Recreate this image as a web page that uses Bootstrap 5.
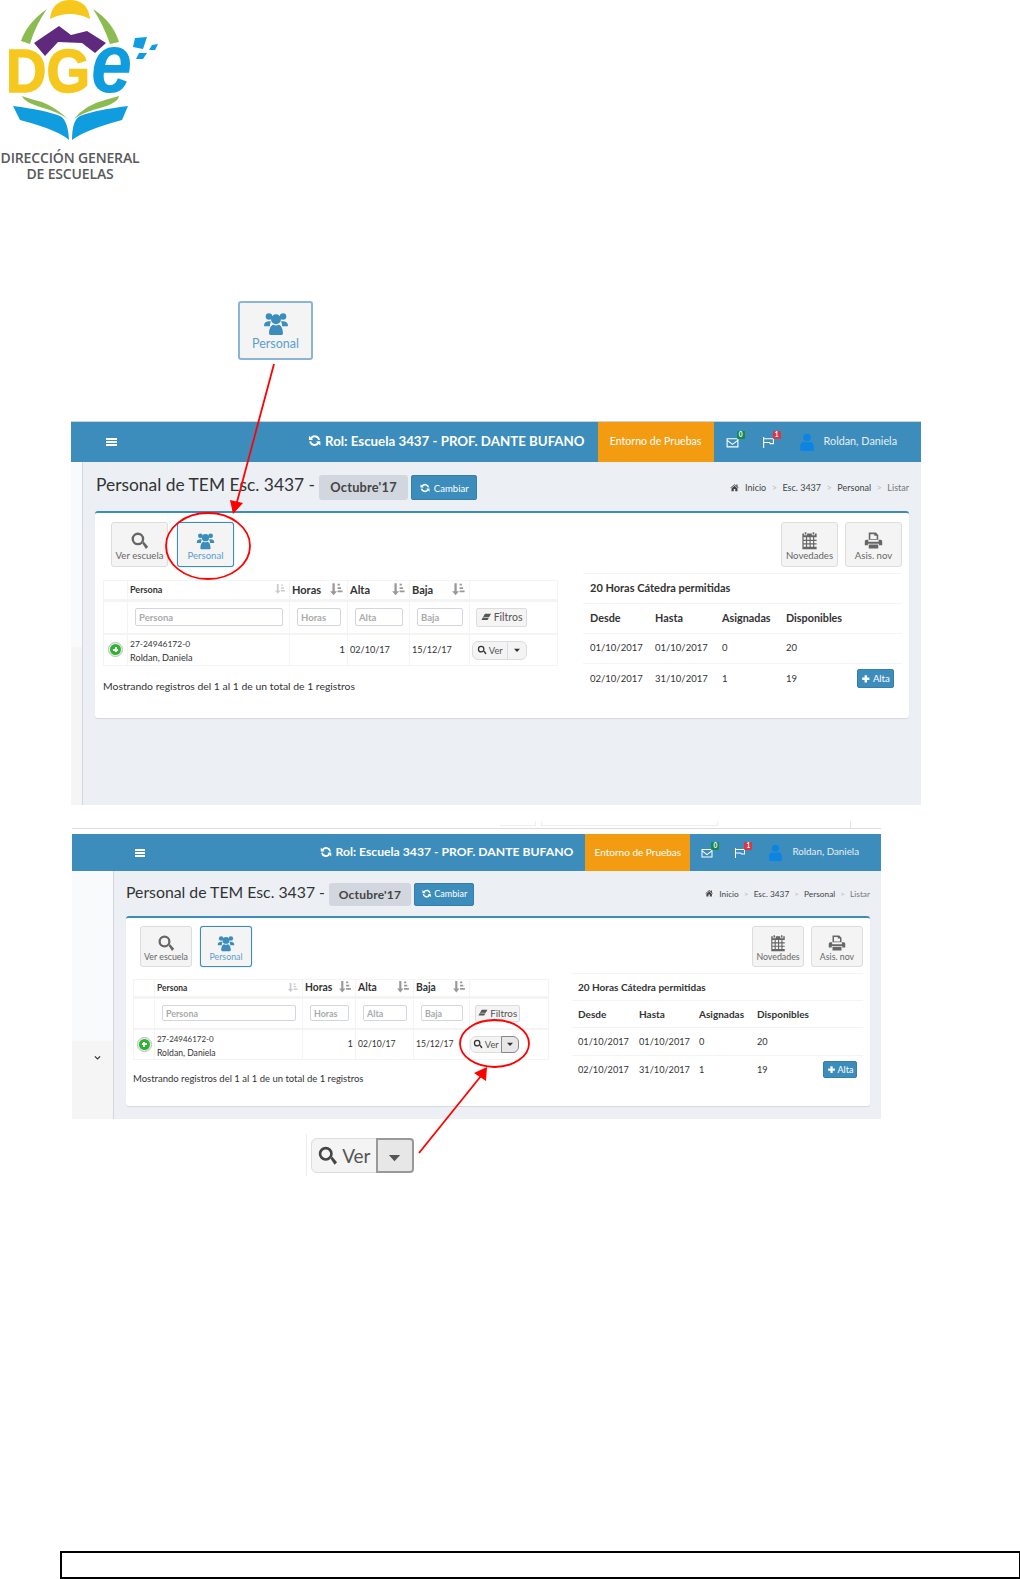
<!DOCTYPE html>
<html lang="es">
<head>
  <meta charset="UTF-8" />
  <meta name="viewport" content="width=device-width, initial-scale=1" />
  <title>Personal - Instructivo</title>
  <link href="https://cdn.jsdelivr.net/npm/bootstrap@5.3.3/dist/css/bootstrap.min.css" rel="stylesheet" />
  <style>
    html, body { margin: 0; background: #fff; }
    body { font-family: "Lato", "Liberation Sans", sans-serif; color: #333; }
    .hoja { position: relative; width: 1020px; height: 1579px; overflow: hidden; }
    .ico { display: inline-block; width: 1em; height: 1em; fill: currentColor; vertical-align: -.12em; }

    /* membrete */
    .membrete { height: 181px; }
    .membrete svg { display: block; width: 160px; height: 142px; }
    .marca { font-family: "Open Sans", sans-serif; font-weight: 600; color: #58595b; line-height: 15.5px; font-size: 14px; width: 140px; margin-top: 8px; text-align: center; letter-spacing: -.15px; white-space: nowrap; }

    /* botones ampliados */
    .ampliado { margin: 120px 0 0 238px; width: 75px; height: 59px; background: #f4f4f4; border: 2px solid #8db4d2; border-radius: 3px; color: #5b9fd0; font-size: 12.5px; line-height: 1; padding-top: 7px; }
    .ampliado .ico { font-size: 26px; display: block; margin: 0 auto 2px; color: #3c8dbc; }
    .ver-grande { margin: 15px 0 0 306px; padding: 4px 0 4px 4px; width: 110px; height: 42px; border-left: 1px solid #eee; }
    .ver-grande .btn-group { height: 35px; width: 103px; }
    .ver-grande .btn { font-size: 19px; line-height: 1; padding: 0; background: #f4f4f4; border: 1px solid #ddd; color: #555; }
    .ver-grande .btn:first-child { width: 65px; }
    .ver-grande .btn:last-child { width: 38px; background: #e7e7e7; border: 2px solid #999; border-radius: 0 4px 4px 0; }
    .ver-grande .ico-caret { font-size: 15px; }
    .ver-grande .btn .ico-lupa { font-size: 21px; color: #444; }

    /* captura */
    .toma { font-size: 10px; background: #ecf0f5; overflow: hidden; }
    .toma-a { width: 850px; height: 384px; margin: 61px 0 0 71px; border-top: 1px solid #d0d0d0; }
    .toma-b { width: 809px; height: 285px; margin: 5px 0 0 72px; }
    .recorte { height: 8px; width: 809px; margin-left: 72px; display: flex; border-bottom: 1px solid #ddd; margin-top: 16px; }
    .recorte i { display: block; height: 5px; border: 1px solid #eee; border-top: 0; }
    .recorte i:nth-child(1) { width: 36px; margin-left: 428px; border-left: 0; }
    .recorte i:nth-child(2) { width: 177px; margin-left: 5px; }
    .recorte i:nth-child(3) { height: 8px; width: 1px; margin-left: 132px; border: 0; background: #e2e2e2; }

    .barra { background: #3c8dbc; color: #fff; padding: 0; justify-content: flex-start; flex-wrap: nowrap; }
    .toma-a .barra { height: 40px; }
    .toma-b .barra { height: 37px; }
    .hamburguesa { display: block; width: 11px; height: 8px; border-top: 2px solid #fff; border-bottom: 2px solid #fff; position: relative; }
    .hamburguesa::after { content: ""; position: absolute; left: 0; right: 0; top: 1px; height: 2px; background: #fff; }
    .toma-a .hamburguesa { margin-left: 35px; }
    .toma-b .hamburguesa { margin-left: 63px; width: 10px; }
    .rol { font-weight: 700; margin-left: auto; white-space: nowrap; }
    .rol .ico { font-size: 1.15em; vertical-align: -.16em; }
    .toma-a .rol { font-size: 13.3px; margin-right: 13px; }
    .toma-b .rol { font-size: 12.2px; margin-right: 12px; }
    .entorno { background: #f39c12; height: 100%; display: flex; align-items: center; justify-content: center; white-space: nowrap; }
    .toma-a .entorno { width: 116px; font-size: 10.6px; }
    .toma-b .entorno { width: 105px; font-size: 10px; }
    .aviso { position: relative; display: block; line-height: 1; }
    .aviso .ico { display: block; }
    .aviso b { position: absolute; top: -5px; right: -6px; min-width: 8px; height: 8px; font-size: 6.5px; line-height: 8px; text-align: center; color: #fff; border-radius: 1px; }
    .toma-a .aviso { margin-left: 12px; font-size: 13px; }
    .toma-a .aviso + .aviso { margin-left: 23px; }
    .toma-b .aviso { margin-left: 11px; font-size: 12px; }
    .toma-b .aviso + .aviso { margin-left: 21px; }
    .usuario { color: #e6eff5; white-space: nowrap; }
    .usuario .ico { color: #0c84e4; }
    .toma-a .usuario { font-size: 10.8px; margin-left: 23px; margin-right: 24px; }
    .toma-a .usuario .ico { font-size: 18px; margin-right: 8px; vertical-align: middle; }
    .toma-b .usuario { font-size: 9.8px; margin-left: 21px; margin-right: 22px; }
    .toma-b .usuario .ico { font-size: 17px; margin-right: 8px; vertical-align: middle; }

    .lateral { flex: none; border-right: 1px solid #d2d6de; display: flex; flex-direction: column; background: #f5f5f5; }
    .lat-sup { background: #f9fafc; }
    .toma-a .cuerpo { height: 343px; }
    .toma-b .cuerpo { height: 248px; }
    .toma-a .lateral { width: 12px; }
    .toma-a .lat-sup { height: 185px; }
    .toma-b .lateral { width: 42px; }
    .toma-b .lat-sup { height: 170px; }
    .toma-b .lat-inf { padding: 13px 0 0 22px; color: #333; font-size: 7px; line-height: 1; }

    .toma-a .contenido { padding: 0 12px; }
    .toma-b .contenido { padding: 0 11px 0 12px; }
    .cabecera { white-space: nowrap; }
    .toma-a .cabecera { height: 49px; padding: 2px 0 0 1px; }
    .toma-b .cabecera { height: 45px; padding: 1px 0 0 0; }
    .cabecera h1 { font-weight: 400; margin: 0 0 4px; color: #333; }
    .toma-a h1 { font-size: 17.4px; }
    .toma-b h1 { font-size: 15.8px; }
    .mes { color: #444; background: #d2d6de; font-weight: 700; border-radius: 3px; display: block; padding: 0; text-align: center; letter-spacing: .2px; }
    .toma-a .mes { width: 89px; height: 25px; line-height: 25px; margin-left: 4px; font-size: 12.8px; }
    .toma-b .mes { width: 82px; height: 23px; line-height: 23px; margin-left: 4px; font-size: 12px; }
    .azul { background: #3c8dbc; border: 1px solid #367fa9; color: #fff; border-radius: 2px; padding: 0; white-space: nowrap; }
    .azul:hover { background: #3c8dbc; color: #fff; }
    .cambiar .ico { font-size: 1.25em; vertical-align: -.2em; }
    .toma-a .cambiar { width: 66px; height: 25px; margin-left: 3px; font-size: 9.6px; line-height: 1; }
    .toma-b .cambiar { width: 60px; height: 23px; margin-left: 3px; font-size: 9px; line-height: 1; }
    .breadcrumb { --bs-breadcrumb-divider: ">"; --bs-breadcrumb-margin-bottom: 0; --bs-breadcrumb-item-padding-x: 5.5px; --bs-breadcrumb-divider-color: #bbb; margin-left: auto; font-size: 9px; color: #444; flex-wrap: nowrap; }
    .breadcrumb .breadcrumb-item.active { color: #777; }
    .breadcrumb .ico { margin-right: 6px; }
    .toma-b .breadcrumb { font-size: 8.3px; --bs-breadcrumb-item-padding-x: 5px; }

    .caja { background: #fff; border-top: 2px solid #3c8dbc; border-radius: 3px; box-shadow: 0 1px 1px rgba(0,0,0,.1); }
    .toma-a .caja { height: 207px; padding: 9px 7px 0 8px; }
    .toma-b .caja { height: 190px; padding: 8px 7px 0 7px; }
    .toma-a .herramientas { padding-left: 8px; gap: 9px; }
    .toma-b .herramientas { padding-left: 7px; gap: 8px; }
    .atajo { display: block; background: #f4f4f4; border: 1px solid #ddd; border-radius: 3px; color: #666; padding: 0; line-height: 1; white-space: nowrap; overflow: hidden; }
    .atajo .ico { display: block; margin: 0 auto 1px; }
    .atajo.activo { color: #5b9fd0; border-color: #3c8dbc; box-shadow: 0 0 1px #3c8dbc; }
    .atajo.activo .ico { color: #3c8dbc; }
    .toma-a .atajo { width: 57px; height: 45px; padding-top: 3px; font-size: 9.6px; }
    .toma-a .atajo .ico { font-size: 19px; }
    .toma-a .atajo:last-child { margin-left: -2px; }
    .toma-b .atajo { width: 52px; height: 41px; padding-top: 3px; font-size: 8.8px; }
    .toma-b .atajo .ico { font-size: 18px; }
    .toma-b .atajo:last-child { margin-left: -1px; }

    .tabla { table-layout: fixed; margin: 0; border-color: #f4f4f4; color: #333; --bs-table-color: #333; }
    .tabla td, .tabla th { padding: 0; vertical-align: middle; border-color: #f4f4f4; white-space: nowrap; }
    .toma-a .lista { width: 455px; margin-top: 13px; font-size: 10px; }
    .toma-b .lista { width: 416px; margin-top: 12px; font-size: 9.4px; }
    .lista th { font-size: 1.1em; padding-left: 2px; }
    .lista th:nth-child(2) { font-size: .9em; padding-left: 2px; }
    .lista thead tr { border-bottom: 3px solid #f4f4f4; }
    .lista .filtro { border-bottom-width: 2px; }
    .lista .orden { float: right; color: #999; margin-right: 4px; font-size: 1.25em; }
    .lista .orden.suave { color: #ccc; }
    .lista td.der { text-align: right; padding-right: 2px; }
    .lista td.ded { padding-left: 2px; font-size: .91em; }
    .lista .fina { font-size: .92em; line-height: 14px; padding: 2px 0 0 2px; }
    .lista .cuil { font-size: .92em; }
    .toma-b .lista .fina { line-height: 13px; }
    .toma-a .lista tr.enc { height: 20px; }
    .toma-a .lista tr.filtro { height: 33px; }
    .toma-a .lista tr.dato { height: 31px; }
    .toma-b .lista tr.enc { height: 18px; }
    .toma-b .lista tr.filtro { height: 31px; }
    .toma-b .lista tr.dato { height: 28px; }
    .toma-a .lista col:nth-child(1) { width: 24px; } .toma-a .lista col:nth-child(2) { width: 162px; } .toma-a .lista col:nth-child(3) { width: 58px; } .toma-a .lista col:nth-child(4) { width: 62px; } .toma-a .lista col:nth-child(5) { width: 60px; }
    .toma-b .lista col:nth-child(1) { width: 21px; } .toma-b .lista col:nth-child(2) { width: 148px; } .toma-b .lista col:nth-child(3) { width: 53px; } .toma-b .lista col:nth-child(4) { width: 58px; } .toma-b .lista col:nth-child(5) { width: 56px; }
    .campo { display: block; width: 100%; height: 18px; padding: 0 3px; font-size: .95em; font-weight: 700; color: #999; border: 1px solid #d2d6de; border-radius: 2px; min-height: 0; line-height: 1; }
    .campo::placeholder { color: #aaa; }
    .celda-campo { padding: 0 6px 0 7px !important; }
    .toma-b .campo { height: 16px; }
    .filtros { display: block; background: #f4f4f4; border: 1px solid #ddd; color: #555; padding: 0; line-height: 1; font-size: 1.05em; border-radius: 2px; white-space: nowrap; }
    .toma-a .filtros { width: 51px; height: 19px; margin-left: 6px; }
    .toma-b .filtros { width: 45px; height: 17px; margin-left: 5px; }
    .ver .btn { background: #f4f4f4; border: 1px solid #ddd; color: #555; font-size: 9.4px; line-height: 1; padding: 0; }
    .ver .ico-lupa { color: #333; font-size: 10px; }
    .ver .ico-caret { font-size: 8px; color: #333; }
    .toma-a .ver { width: 55px; height: 19px; margin: 1px 0 0 2px; }
    .toma-a .ver .btn:first-child { width: 35px; }
    .toma-a .ver .btn:last-child { width: 20px; }
    .toma-b .ver { width: 49px; height: 17px; margin-left: 0; }
    .toma-b .ver .btn:first-child { width: 31px; }
    .toma-b .ver .btn:last-child { width: 18px; background: #e7e7e7; border-color: #888; }
    .alta-si { display: block; width: 15px; height: 15px; border-radius: 50%; border: 1px solid #bbb; background: #eee; padding: 1px; margin: 0 auto; }
    .alta-si i { display: block; width: 11px; height: 11px; border-radius: 50%; background: #2db52d; position: relative; }
    .alta-si i::before { content: ""; position: absolute; left: 3px; right: 3px; top: 4.5px; height: 2px; background: #fff; }
    .alta-si i::after { content: ""; position: absolute; top: 3px; bottom: 3px; left: 4.5px; width: 2px; background: #fff; }
    .toma-a .leyenda { margin: 13px 0 0; font-size: 10.4px; }
    .toma-b .leyenda { margin: 12px 0 0; font-size: 9.5px; }

    .cupos thead th { font-weight: 700; }
    .toma-a .cupos { width: 319px; margin: 6px 0 0 25px; border-top: 1px solid #f4f4f4; font-size: 9.5px; }
    .toma-b .cupos { width: 291px; margin: 6px 0 0 23px; border-top: 1px solid #f4f4f4; font-size: 9.2px; }
    .toma-a .cupos thead th { font-size: 10.8px; }
    .toma-b .cupos thead th { font-size: 10px; }
    .toma-a .cupos thead tr:first-child th { font-size: 11px; }
    .toma-b .cupos thead tr:first-child th { font-size: 10px; }
    .toma-a .cupos th, .toma-a .cupos td { padding-left: 7px; }
    .toma-b .cupos th, .toma-b .cupos td { padding-left: 6px; }
    .toma-a .cupos tr { height: 30px; }
    .toma-b .cupos tr { height: 27px; }
    .toma-b .cupos tbody tr { height: 28px; }
    .toma-a .cupos col:nth-child(1) { width: 65px; } .toma-a .cupos col:nth-child(2) { width: 67px; } .toma-a .cupos col:nth-child(3) { width: 64px; } .toma-a .cupos col:nth-child(4) { width: 71px; }
    .toma-b .cupos col:nth-child(1) { width: 61px; } .toma-b .cupos col:nth-child(2) { width: 60px; } .toma-b .cupos col:nth-child(3) { width: 58px; } .toma-b .cupos col:nth-child(4) { width: 64px; }
    .alta { display: block; margin-left: auto; line-height: 1; }
    .toma-a .alta { width: 37px; height: 19px; margin-right: 8px; font-size: 9.6px; }
    .toma-b .alta { width: 34px; height: 17px; margin-right: 6px; font-size: 9px; }

    .pie { width: 960px; height: 28px; border: 2px solid #000; border-right-width: 1px; margin: 375px 0 0 60px; }
    .anotaciones { position: absolute; left: 0; top: 0; width: 1020px; height: 1579px; pointer-events: none; }
  </style>
</head>
<body>

  <!-- iconos -->
  <svg width="0" height="0" class="position-absolute">
    <symbol id="i-refresh" viewBox="0 0 24 24"><path d="M20.5 10.5A8.5 8.5 0 0 0 5.5 6.8L3 4.5V11h6.5L7.8 9.1A5.4 5.4 0 0 1 17.5 11zM3.5 13.5A8.5 8.5 0 0 0 18.5 17.2L21 19.5V13h-6.5l1.7 1.9A5.4 5.4 0 0 1 6.5 13z"/></symbol>
    <symbol id="i-lupa" viewBox="0 0 24 24"><path fill-rule="evenodd" d="M10 2a8 8 0 1 1-.01 16A8 8 0 0 1 10 2zm0 3a5 5 0 1 0 .01 10A5 5 0 0 0 10 5zM15.2 15.2l2.1-2 5.6 6.6-2.8 2.8z"/></symbol>
    <symbol id="i-users" viewBox="0 0 24 24"><circle cx="5.5" cy="6" r="3"/><circle cx="18.5" cy="6" r="3"/><circle cx="12" cy="8.5" r="4.6"/><path d="M1 14c0-2.5 2-3.6 4.5-3.6 1 0 1.5.2 1.9.5A6 6 0 0 0 6.4 15H1zM23 14c0-2.5-2-3.6-4.5-3.6-1 0-1.5.2-1.9.5a6 6 0 0 1 1 4.1H23zM7 23c-1 0-1.400-.6-1.400-1.600 0-3.600 1.400-7.700 4-7.900 1.500 1 3.300 1 4.800 0 2.600.2 4 4.300 4 7.900 0 1-.4 1.600-1.400 1.600z"/></symbol>
    <symbol id="i-cal" viewBox="0 0 24 24"><path fill-rule="evenodd" d="M6 1.500h2v3H6zM16 1.500h2v3h-2zM3 3h2v2.500h4V3h6v2.500h4V3h2v20H3zM4.500 8v3h3V8zm4.500 0v3h3V8zm4.500 0v3h3V8zm4.500 0v3H21V8zM4.500 12.500v3h3v-3zm4.500 0v3h3v-3zm4.500 0v3h3v-3zm4.500 0v3H21v-3zM4.500 17v3h3v-3zm4.500 0v3h3v-3zm4.500 0v3h3v-3zm4.500 0v3H21v-3z"/></symbol>
    <symbol id="i-print" viewBox="0 0 24 24"><path fill-rule="evenodd" d="M6 2h9l3 3v6H6zm2 2v6h8V6h-3V4zM3 11h2.500v2.500h13V11H21a2 2 0 0 1 2 2v5h-4v-2H5v2H1v-5a2 2 0 0 1 2-2zM6 17h12v5H6z"/></symbol>
    <symbol id="i-home" viewBox="0 0 24 24"><path d="M12 3l5 4.500V4h3v6l3 2.700-1.300 1.400L12 5.500 2.300 14.100 1 12.700zM12 7.500l8 7V22h-6v-6h-4v6H4v-7.500z"/></symbol>
    <symbol id="i-mail" viewBox="0 0 24 24"><path fill-rule="evenodd" d="M1 4h22v17H1zm2 2v1.200l9 7 9-7V6zm18 3.700l-9 7-9-7V19h18z"/></symbol>
    <symbol id="i-flag" viewBox="0 0 24 24"><path fill-rule="evenodd" d="M2 2h2v2h18v11h-7l-2-2H4v9H2zm2 4v5h10l2 2h4V6z"/></symbol>
    <symbol id="i-user" viewBox="0 0 24 24"><circle cx="12" cy="6" r="5"/><path d="M3 24v-7c0-3 2-5 5-5.500 2.500 1.300 5.500 1.300 8 0 3 .5 5 2.500 5 5.500v7z"/></symbol>
    <symbol id="i-goma" viewBox="0 0 24 24"><path d="M9 4h14l-8 14H1z"/><path d="M5.500 12.500h14" stroke="#f4f4f4" stroke-width="1.500"/></symbol>
    <symbol id="i-orden" viewBox="0 0 24 24"><path d="M6 2h4v14h4l-6 7-6-7h4zM15 3h4v3h-4zM15 9h6v3h-6zM15 15h9v3h-9z"/></symbol>
    <symbol id="i-mas" viewBox="0 0 24 24"><path d="M9 3h6v6h6v6h-6v6H9v-6H3V9h6z"/></symbol>
    <symbol id="i-caret" viewBox="0 0 24 24"><path d="M3 8h18l-9 10z"/></symbol>
    <symbol id="i-chev" viewBox="0 0 24 24"><path d="M3 8l9 9 9-9" fill="none" stroke="currentColor" stroke-width="4"/></symbol>
  </svg>

  <div class="hoja">

    <header class="membrete">
      <svg viewBox="0 0 160 142" role="img" aria-label="DGE">
        <path d="M50 19Q52 0 70 0Q88 0 90 19Q70 9 50 19z" fill="#f6c81e"/>
        <path d="M47 9Q27 23 21 41L30 44Q35 26 47 9z" fill="#8cbb52"/>
        <path d="M93 9Q113 22 119 42L110 44Q104 26 93 9z" fill="#8cbb52"/>
        <path d="M34 43L59 26L71 35L87 31L106 43L95 53L82 43L58 42L45 56z" fill="#5f2a7d"/>
        <text x="6" y="92" font-family="Liberation Sans" font-weight="700" font-size="61" textLength="84" lengthAdjust="spacingAndGlyphs" fill="#f6c81e" stroke="#f6c81e" stroke-width="1.500">DG</text>
        <text x="91" y="92" font-family="Liberation Sans" font-weight="700" font-style="italic" font-size="84" textLength="41" lengthAdjust="spacingAndGlyphs" fill="#0f9ddf">e</text>
        <path d="M135 38L147 37L143 49L133 47zM152 45L158 44L155 50L149 50zM139 53L147 53L143 59L136 59z" fill="#0f9ddf"/>
        <path d="M22 96Q24 102 40 107Q58 112 68 119Q55 107 42 102Q30 99 22 96z" fill="#8cbb52"/>
        <path d="M119 96Q118 103 100 108Q84 112 74 119Q85 105 105 100z" fill="#8cbb52"/>
        <path d="M13 106Q45 110 60 116Q68 120 69 140Q58 130 20 120z" fill="#0f9ddf"/>
        <path d="M128 106Q95 110 80 116Q72 120 72 140Q85 130 122 120z" fill="#0f9ddf"/>
      </svg>
      <div class="marca">DIRECCIÓN GENERAL<br />DE ESCUELAS</div>
    </header>

    <div class="ampliado text-center"><svg class="ico"><use href="#i-users"/></svg>Personal</div>

    <!-- primera captura -->
    <section class="toma toma-a">
      <nav class="navbar barra">
        <span class="hamburguesa"></span>
        <span class="rol"><svg class="ico"><use href="#i-refresh"/></svg> Rol: Escuela 3437 - PROF. DANTE BUFANO</span>
        <span class="entorno">Entorno de Pruebas</span>
        <span class="aviso"><svg class="ico"><use href="#i-mail"/></svg><b class="bg-success">0</b></span>
        <span class="aviso"><svg class="ico"><use href="#i-flag"/></svg><b class="bg-danger">1</b></span>
        <span class="usuario"><svg class="ico"><use href="#i-user"/></svg>Roldan, Daniela</span>
      </nav>
      <div class="d-flex cuerpo">
        <aside class="lateral"><div class="lat-sup"></div><div class="lat-inf flex-grow-1"></div></aside>
        <main class="contenido flex-grow-1">
          <div class="cabecera d-flex align-items-center">
            <h1>Personal de TEM Esc. 3437 -</h1>
            <span class="mes">Octubre'17</span>
            <button class="btn azul cambiar" type="button"><svg class="ico"><use href="#i-refresh"/></svg> Cambiar</button>
            <ol class="breadcrumb">
              <li class="breadcrumb-item"><svg class="ico"><use href="#i-home"/></svg>Inicio</li>
              <li class="breadcrumb-item">Esc. 3437</li>
              <li class="breadcrumb-item">Personal</li>
              <li class="breadcrumb-item active">Listar</li>
            </ol>
          </div>
          <div class="caja">
            <div class="herramientas d-flex">
              <button class="atajo text-center" type="button"><svg class="ico"><use href="#i-lupa"/></svg>Ver escuela</button>
              <button class="atajo activo text-center" type="button"><svg class="ico"><use href="#i-users"/></svg>Personal</button>
              <button class="atajo text-center ms-auto" type="button"><svg class="ico"><use href="#i-cal"/></svg>Novedades</button>
              <button class="atajo text-center" type="button"><svg class="ico"><use href="#i-print"/></svg>Asis. nov</button>
            </div>
            <div class="d-flex align-items-start">
              <div>
                <table class="table table-bordered tabla lista">
                  <colgroup><col /><col /><col /><col /><col /><col /></colgroup>
                  <thead>
                    <tr class="enc"><th></th><th>Persona<svg class="ico orden suave"><use href="#i-orden"/></svg></th><th>Horas<svg class="ico orden"><use href="#i-orden"/></svg></th><th>Alta<svg class="ico orden"><use href="#i-orden"/></svg></th><th>Baja<svg class="ico orden"><use href="#i-orden"/></svg></th><th></th></tr>
                  </thead>
                  <tbody>
                    <tr class="filtro">
                      <td></td>
                      <td class="celda-campo"><input class="form-control campo" placeholder="Persona" /></td>
                      <td class="celda-campo"><input class="form-control campo" placeholder="Horas" /></td>
                      <td class="celda-campo"><input class="form-control campo" placeholder="Alta" /></td>
                      <td class="celda-campo"><input class="form-control campo" placeholder="Baja" /></td>
                      <td><button class="btn filtros" type="button"><svg class="ico"><use href="#i-goma"/></svg> Filtros</button></td>
                    </tr>
                    <tr class="dato">
                      <td><span class="alta-si"><i></i></span></td>
                      <td class="fina"><span class="cuil">27-24946172-0</span><br />Roldan, Daniela</td>
                      <td class="der">1</td>
                      <td class="ded">02/10/17</td>
                      <td class="ded">15/12/17</td>
                      <td><div class="btn-group ver"><button class="btn" type="button"><svg class="ico ico-lupa"><use href="#i-lupa"/></svg> Ver</button><button class="btn" type="button"><svg class="ico ico-caret"><use href="#i-caret"/></svg></button></div></td>
                    </tr>
                  </tbody>
                </table>
                <p class="leyenda">Mostrando registros del 1 al 1 de un total de 1 registros</p>
              </div>
              <table class="table tabla cupos">
                <colgroup><col /><col /><col /><col /><col /></colgroup>
                <thead>
                  <tr><th colspan="5">20 Horas Cátedra permitidas</th></tr>
                  <tr><th>Desde</th><th>Hasta</th><th>Asignadas</th><th>Disponibles</th><th></th></tr>
                </thead>
                <tbody>
                  <tr><td>01/10/2017</td><td>01/10/2017</td><td>0</td><td>20</td><td></td></tr>
                  <tr class="border-0"><td class="border-0">02/10/2017</td><td class="border-0">31/10/2017</td><td class="border-0">1</td><td class="border-0">19</td><td class="border-0"><button class="btn azul alta" type="button"><svg class="ico"><use href="#i-mas"/></svg> Alta</button></td></tr>
                </tbody>
              </table>
            </div>
          </div>
        </main>
      </div>
    </section>

    <div class="recorte"><i></i><i></i><i></i></div>

    <!-- segunda captura -->
    <section class="toma toma-b">
      <nav class="navbar barra">
        <span class="hamburguesa"></span>
        <span class="rol"><svg class="ico"><use href="#i-refresh"/></svg> Rol: Escuela 3437 - PROF. DANTE BUFANO</span>
        <span class="entorno">Entorno de Pruebas</span>
        <span class="aviso"><svg class="ico"><use href="#i-mail"/></svg><b class="bg-success">0</b></span>
        <span class="aviso"><svg class="ico"><use href="#i-flag"/></svg><b class="bg-danger">1</b></span>
        <span class="usuario"><svg class="ico"><use href="#i-user"/></svg>Roldan, Daniela</span>
      </nav>
      <div class="d-flex cuerpo">
        <aside class="lateral"><div class="lat-sup"></div><div class="lat-inf flex-grow-1"><svg class="ico"><use href="#i-chev"/></svg></div></aside>
        <main class="contenido flex-grow-1">
          <div class="cabecera d-flex align-items-center">
            <h1>Personal de TEM Esc. 3437 -</h1>
            <span class="mes">Octubre'17</span>
            <button class="btn azul cambiar" type="button"><svg class="ico"><use href="#i-refresh"/></svg> Cambiar</button>
            <ol class="breadcrumb">
              <li class="breadcrumb-item"><svg class="ico"><use href="#i-home"/></svg>Inicio</li>
              <li class="breadcrumb-item">Esc. 3437</li>
              <li class="breadcrumb-item">Personal</li>
              <li class="breadcrumb-item active">Listar</li>
            </ol>
          </div>
          <div class="caja">
            <div class="herramientas d-flex">
              <button class="atajo text-center" type="button"><svg class="ico"><use href="#i-lupa"/></svg>Ver escuela</button>
              <button class="atajo activo text-center" type="button"><svg class="ico"><use href="#i-users"/></svg>Personal</button>
              <button class="atajo text-center ms-auto" type="button"><svg class="ico"><use href="#i-cal"/></svg>Novedades</button>
              <button class="atajo text-center" type="button"><svg class="ico"><use href="#i-print"/></svg>Asis. nov</button>
            </div>
            <div class="d-flex align-items-start">
              <div>
                <table class="table table-bordered tabla lista">
                  <colgroup><col /><col /><col /><col /><col /><col /></colgroup>
                  <thead>
                    <tr class="enc"><th></th><th>Persona<svg class="ico orden suave"><use href="#i-orden"/></svg></th><th>Horas<svg class="ico orden"><use href="#i-orden"/></svg></th><th>Alta<svg class="ico orden"><use href="#i-orden"/></svg></th><th>Baja<svg class="ico orden"><use href="#i-orden"/></svg></th><th></th></tr>
                  </thead>
                  <tbody>
                    <tr class="filtro">
                      <td></td>
                      <td class="celda-campo"><input class="form-control campo" placeholder="Persona" /></td>
                      <td class="celda-campo"><input class="form-control campo" placeholder="Horas" /></td>
                      <td class="celda-campo"><input class="form-control campo" placeholder="Alta" /></td>
                      <td class="celda-campo"><input class="form-control campo" placeholder="Baja" /></td>
                      <td><button class="btn filtros" type="button"><svg class="ico"><use href="#i-goma"/></svg> Filtros</button></td>
                    </tr>
                    <tr class="dato">
                      <td><span class="alta-si"><i></i></span></td>
                      <td class="fina"><span class="cuil">27-24946172-0</span><br />Roldan, Daniela</td>
                      <td class="der">1</td>
                      <td class="ded">02/10/17</td>
                      <td class="ded">15/12/17</td>
                      <td><div class="btn-group ver"><button class="btn" type="button"><svg class="ico ico-lupa"><use href="#i-lupa"/></svg> Ver</button><button class="btn" type="button"><svg class="ico ico-caret"><use href="#i-caret"/></svg></button></div></td>
                    </tr>
                  </tbody>
                </table>
                <p class="leyenda">Mostrando registros del 1 al 1 de un total de 1 registros</p>
              </div>
              <table class="table tabla cupos">
                <colgroup><col /><col /><col /><col /><col /></colgroup>
                <thead>
                  <tr><th colspan="5">20 Horas Cátedra permitidas</th></tr>
                  <tr><th>Desde</th><th>Hasta</th><th>Asignadas</th><th>Disponibles</th><th></th></tr>
                </thead>
                <tbody>
                  <tr><td>01/10/2017</td><td>01/10/2017</td><td>0</td><td>20</td><td></td></tr>
                  <tr class="border-0"><td class="border-0">02/10/2017</td><td class="border-0">31/10/2017</td><td class="border-0">1</td><td class="border-0">19</td><td class="border-0"><button class="btn azul alta" type="button"><svg class="ico"><use href="#i-mas"/></svg> Alta</button></td></tr>
                </tbody>
              </table>
            </div>
          </div>
        </main>
      </div>
    </section>

    <div class="ver-grande">
      <div class="btn-group"><button class="btn" type="button"><svg class="ico ico-lupa"><use href="#i-lupa"/></svg> Ver</button><button class="btn" type="button"><svg class="ico ico-caret"><use href="#i-caret"/></svg></button></div>
    </div>

    <div class="pie"></div>

    <!-- flechas y marcas rojas sobre las capturas -->
    <svg class="anotaciones" viewBox="0 0 1020 1579">
      <g fill="none" stroke="#f00" stroke-width="1.8">
        <path d="M274 364L237 502"/>
        <ellipse cx="208" cy="546" rx="42" ry="33"/>
        <ellipse cx="494.5" cy="1043.5" rx="34.5" ry="23.5"/>
        <path d="M419 1153L481 1076"/>
      </g>
      <path d="M233 514L230 500L243 503z" fill="#f00"/>
      <path d="M487 1067L474 1073L486 1081z" fill="#f00"/>
    </svg>
  </div>

  <script src="https://cdn.jsdelivr.net/npm/bootstrap@5.3.3/dist/js/bootstrap.bundle.min.js"></script>
</body>
</html>
